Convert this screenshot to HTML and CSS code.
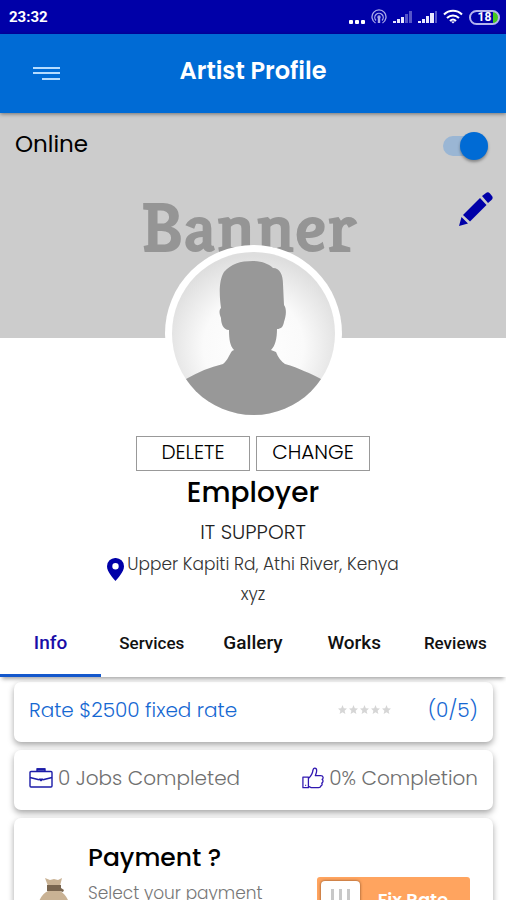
FILE: index.html
```html
<!DOCTYPE html>
<html lang="en">
<head>
<meta charset="utf-8">
<meta name="viewport" content="width=device-width, initial-scale=1">
<title>Artist Profile</title>
<link rel="stylesheet" href="styles.css">
</head>
<body>
<div class="app">
  <div class="status">
    <span class="clock">23:32</span>
    <div class="status-icons">
      <svg width="16" height="16" viewBox="0 0 16 16" fill="#fff"><rect x="0" y="11" width="4" height="4" rx="1"/><rect x="6" y="11" width="4" height="4" rx="1"/><rect x="12" y="11" width="4" height="4" rx="1"/></svg>
      <svg width="16" height="16" viewBox="0 0 16 16" fill="none" stroke="#a9a9ea" stroke-width="1.3"><path d="M4.5 14A7 7 0 1 1 11.500 14"/><path d="M5 11.500A4.200 4.200 0 1 1 11 11.500"/><path d="M8 8v6" stroke-width="2.400"/><circle cx="8" cy="8" r="1"/></svg>
      <svg width="19" height="16" viewBox="0 0 19 16" fill="#e8e8ff"><path d="M0 12h3v2H0zM4 10h3v4H4zM8 8h3v6H8z"/><path d="M12 5h3v9h-3zM16 2h3v12h-3z" fill="#5555c8"/></svg>
      <svg width="19" height="16" viewBox="0 0 19 16" fill="#e8e8ff"><path d="M0 12h3v2H0zM4 10h3v4H4zM8 7h3v7H8zM12 4h4v10h-4z"/><path d="M17 2h2v12h-2z" fill="#5555c8"/></svg>
      <svg width="20" height="16" viewBox="0 0 20 16" fill="none" stroke="#fff" stroke-width="2"><path d="M1 5.500C6 .5 14 .5 19 5.500M4 9C7.500 5.500 12.500 5.500 16 9M7 12c2-2 4-2 6 0"/><path d="M8 12.500h4l-2 2z" fill="#fff" stroke="none"/></svg>
      <span class="battery">18</span>
    </div>
  </div>

  <header class="appbar">
    <button class="menu" type="button" aria-label="Menu">
      <svg width="27" height="16" viewBox="0 0 27 16" fill="#b5dcff"><path d="M0 2h27v2H0zM0 7h27v2H0zM9 13h18v2H9z"/></svg>
    </button>
    <h1>Artist Profile</h1>
  </header>

  <section class="banner">
    <div class="online">
      <label for="online">Online</label>
      <input class="switch" id="online" type="checkbox" role="switch" checked>
    </div>
    <button class="edit" type="button" aria-label="Edit banner">
      <svg width="34" height="36" viewBox="0 0 34 36" fill="#0000a8"><path d="M23 4l4-3q2-1.500 4 .5l2 2.500q1.500 2-.5 4L29 11zM21 6l6.500 7L11 29.500 4 23zM2.500 25L9 31.500 0 34z"/></svg>
    </button>
    <div class="banner-text">Banner</div>
  </section>

  <section class="profile">
    <svg class="avatar" viewBox="0 0 177 177" role="img" aria-label="Profile photo">
      <defs>
        <radialGradient id="glow" cx="50%" cy="58%" r="56%"><stop offset="0" stop-color="#fff"/><stop offset=".55" stop-color="#fafafa"/><stop offset="1" stop-color="#dedede"/></radialGradient>
        <clipPath id="round"><circle cx="88.500" cy="88.500" r="81.500"/></clipPath>
      </defs>
      <circle cx="88.500" cy="88.500" r="88.500" fill="#fff"/>
      <circle cx="88.500" cy="88.500" r="81.500" fill="url(#glow)"/>
      <path clip-path="url(#round)" fill="#989898" d="M56 63C54 49 54 35 59 27C66 19 75 16 88 16C97 16 104 19 108 23C115 23 118 30 118 39L119 60C122 64 121 71 119 77C118 82 116 84 112 84C112 94 110 101 106 105L111 107Q114 115 120 119C134 123 146 129 156 134L177 177H0L21 134C33 127 45 122 58 119C63 115 64 110 67 106L69 105C65 101 64 94 64 85C58 85 56 78 56 73C54 68 54 65 56 63Z"/>
    </svg>
    <div class="actions">
      <button type="button">DELETE</button>
      <button type="button">CHANGE</button>
    </div>
    <h2>Employer</h2>
    <p class="role">IT SUPPORT</p>
    <p class="address">
      <svg width="17" height="23" viewBox="0 0 17 23"><path fill="#0000a8" fill-rule="evenodd" d="M8.500 0A8.300 8.300 0 0 1 17 8.300C17 14 11 20 8.500 23C6 20 0 14 0 8.300A8.300 8.300 0 0 1 8.500 0ZM8.500 5a3.200 3.200 0 1 0 0 6.400a3.200 3.200 0 1 0 0-6.400Z"/></svg>
      <span>Upper Kapiti Rd, Athi River, Kenya</span>
    </p>
    <p class="note">xyz</p>
  </section>

  <nav class="tabs">
    <a class="active" href="#info">Info</a>
    <a class="small" href="#services">Services</a>
    <a href="#gallery">Gallery</a>
    <a href="#works">Works</a>
    <a class="small" href="#reviews">Reviews</a>
  </nav>

  <main class="cards" id="info">
    <section class="card rate">
      <span>Rate $2500 fixed rate</span>
      <svg class="stars" width="54" height="10" viewBox="0 0 54 10" fill="#d6d6d6" role="img" aria-label="0 of 5 stars"><defs><path id="star" d="M4.500 0L5.800 3.300L9 3.600L6.600 5.800L7.400 9L4.500 7.300L1.600 9L2.400 5.800L0 3.600L3.200 3.300Z"/></defs><use href="#star"/><use href="#star" x="11"/><use href="#star" x="22"/><use href="#star" x="33"/><use href="#star" x="44"/></svg>
      <span class="score">(0/5)</span>
    </section>
    <section class="card stats">
      <span class="stat">
        <svg width="24" height="20" viewBox="0 0 24 20" fill="none" stroke="#1b1ba8" stroke-width="1.400"><rect x="1" y="3.500" width="22" height="15.500" rx="1"/><path d="M8 3V1h8v2M1 9.500l9 2.200M23 9.500l-9 2.200"/><path d="M8 1.500h8" stroke-width="2.500"/><path d="M10 10.500h4v1.500l-2 1.500-2-1.500z" fill="#1b1ba8" stroke="none"/></svg>
        0 Jobs Completed
      </span>
      <span class="stat">
        <svg width="22" height="24" viewBox="0 0 24 24" fill="none" stroke="#3018b0" stroke-width="1.400" stroke-linejoin="round"><path d="M1 11h6v11.500H1zM7 12.500C10 10 11.500 7 12 3.500C12 .5 16 .5 16 4C16 6 15 8 14.500 9.500H20.500C23.500 9.500 23.500 12.500 22 13.500C23.500 14.500 23 17 21.500 17.500C22.500 19 21.500 20.500 20.500 20.500C20.500 22 19.500 22.500 18 22.500H10L7 21"/><path d="M3.500 20h1"/></svg>
        0% Completion
      </span>
    </section>
    <section class="card payment">
      <svg class="bag" width="36" height="64" viewBox="0 0 36 64"><path fill="#c9b294" d="M9 0L14 2L18 1L22 2L26 0L24 8V13C31 17 36 27 36 42Q36 62 18 62T0 42C0 27 4 17 12 13V8Z"/><path fill="#79654f" d="M11 7h14v3l3 2-1 2-3-1H11z"/></svg>
      <div class="payment-text">
        <h3>Payment ?</h3>
        <p>Select your payment</p>
      </div>
      <button class="fix" type="button" role="switch" aria-checked="false">
        <span class="knob"><i></i><i></i><i></i></span>
        <span class="fix-label">Fix Rate</span>
      </button>
    </section>
  </main>
</div>
</body>
</html>
```
FILE: styles.css
```css
* { box-sizing: border-box; }

body {
  margin: 0;
  background: #fff;
  color: #000;
  font-family: Poppins, Inter, "Open Sans", sans-serif;
}

h1, h2, h3, p { margin: 0; }
button { font: inherit; color: inherit; background: none; border: 0; padding: 0; }
svg { display: block; flex: none; }

.app {
  display: flex;
  flex-direction: column;
  height: 100vh;
  overflow: hidden;
}
.app > * { flex: none; }

.status {
  display: flex;
  align-items: center;
  justify-content: space-between;
  height: 34px;
  padding: 0 6px 0 9px;
  background: #0000a8;
  color: #fff;
}
.clock { font: 700 15px/20px Roboto, sans-serif; }
.status-icons { display: flex; align-items: center; gap: 6px; }
.battery {
  width: 31px;
  height: 15px;
  border: 2px solid #b4b4ee;
  border-radius: 8px;
  background: linear-gradient(90deg, transparent 80%, #46c81e 80%);
  font: 700 12px/11px Roboto, sans-serif;
  text-align: center;
}

.appbar {
  position: relative;
  z-index: 1;
  display: grid;
  grid-template-columns: 60px 1fr 60px;
  align-items: center;
  height: 79px;
  padding-bottom: 5px;
  background: #006bd5;
  box-shadow: 0 1px 4px rgba(0, 0, 0, .45);
  color: #fff;
}
.menu { justify-self: end; padding-top: 4px; }
.appbar h1 { font-size: 24px; font-weight: 600; line-height: 36px; text-align: center; }

.banner {
  display: flex;
  flex-direction: column;
  height: 225px;
  background: #ccc;
}
.online {
  display: flex;
  align-items: center;
  justify-content: space-between;
  padding: 14px 18px 0 15px;
  font-size: 23px;
  line-height: 34px;
}
.switch {
  appearance: none;
  display: flex;
  align-items: center;
  justify-content: flex-end;
  width: 45px;
  height: 20px;
  margin: 4px 0 0;
  border-radius: 10px;
  background: #9ab6d4;
}
.switch::before {
  content: "";
  width: 28px;
  height: 28px;
  border-radius: 50%;
  background: #006bd5;
  box-shadow: 0 2px 3px rgba(0, 0, 0, .35);
}
.edit { align-self: flex-end; margin: 31px 13px 0 0; }
.banner-text {
  margin-top: -38px;
  padding-right: 8px;
  color: #959595;
  font: 700 71px/76px Kreon, "Bree Serif", "Zilla Slab", Bitter, "Crete Round", "Noto Serif", serif;
  text-align: center;
}

.profile {
  display: flex;
  flex-direction: column;
  align-items: center;
  text-align: center;
}
.avatar { position: relative; width: 177px; height: 177px; margin-top: -93px; }
.actions { display: flex; gap: 6px; margin-top: 14px; }
.actions button {
  width: 114px;
  height: 35px;
  padding-bottom: 4px;
  border: 1px solid #999;
  font-size: 20px;
  font-weight: 300;
  line-height: 30px;
}
.profile h2 { font-size: 28px; font-weight: 500; line-height: 44px; }
.role { margin-top: 2px; color: #222; font-size: 20px; font-weight: 300; line-height: 30px; }
.address { display: flex; align-items: center; gap: 3px; margin-top: 2px; }
.address svg { margin-top: 10px; }
.address, .note { color: #333; font-size: 17px; font-weight: 300; line-height: 30px; }
.address { height: 30px; }

.tabs {
  position: relative;
  z-index: 1;
  display: grid;
  grid-template-columns: repeat(5, 1fr);
  height: 68px;
  background: #fff;
  box-shadow: 0 4px 4px -2px rgba(0, 0, 0, .35);
}
.tabs a {
  display: flex;
  align-items: center;
  justify-content: center;
  border-top: 3px solid transparent;
  border-bottom: 3px solid transparent;
  color: #111;
  font: 500 19px/24px Roboto, sans-serif;
  text-decoration: none;
}
.tabs .small { font-size: 17px; }
.tabs .active { border-bottom-color: #1458cc; color: #1a0da8; }

.cards {
  display: flex;
  flex-direction: column;
  gap: 8px;
  padding: 5px 13px 13px 14px;
}
.card {
  display: flex;
  border-radius: 7px;
  background: #fff;
  box-shadow: 0 3px 6px rgba(0, 0, 0, .35);
}
.rate, .stats {
  align-items: center;
  height: 60px;
  padding: 0 15px 5px;
  font-size: 20px;
  font-weight: 300;
}
.rate { color: #1668d2; }
.stars { margin-left: auto; }
.score { margin-left: 36px; }
.stats { justify-content: space-between; color: #707070; }
.stat { display: flex; align-items: center; gap: 5px; }
.payment { height: 140px; padding: 20px 23px 0 22px; }
.bag { margin-top: 40px; }
.payment-text { margin-left: 16px; }
.payment h3 { font-size: 25px; font-weight: 500; line-height: 40px; }
.payment p { color: #777; font-size: 17px; font-weight: 300; line-height: 30px; }
.fix {
  display: flex;
  width: 153px;
  height: 46px;
  margin: 39px 0 0 auto;
  padding: 4px;
  border-radius: 3px;
  background: #ffa45f;
}
.knob {
  display: flex;
  align-items: center;
  justify-content: center;
  gap: 5px;
  width: 39px;
  height: 38px;
  border-radius: 4px;
  background: #fff;
  box-shadow: 0 0 3px rgba(90, 50, 20, .8);
}
.knob i { width: 3px; height: 22px; background: #c8c8c8; }
.fix-label { flex: 1; color: #fff; font-size: 18px; font-weight: 600; line-height: 38px; text-align: center; }
```
